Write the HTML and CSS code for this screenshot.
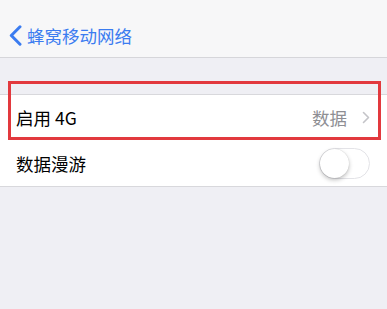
FILE: index.html
```html
<!DOCTYPE html>
<html>
<head>
<meta charset="utf-8">
<link rel="stylesheet" href="styles.css">
</head>
<body>
<div class="nav">
  <svg class="back" width="15" height="21" viewBox="0 0 15 21"><path d="M12 1.8 L3.3 10.5 L12 19.2" fill="none" stroke="#3b7cf0" stroke-width="3" stroke-linecap="round" stroke-linejoin="round"/></svg>
  <span class="title">蜂窝移动网络</span>
</div>
<div class="group">
  <div class="row">
    <span class="label">启用 4G</span>
    <span class="value">数据</span>
    <svg class="chev" width="8" height="13" viewBox="0 0 8 13"><path d="M1.5 1.5 L6.5 6.5 L1.5 11.5" fill="none" stroke="#c4c4c8" stroke-width="1.6" stroke-linecap="round" stroke-linejoin="round"/></svg>
  </div>
  <div class="row row2">
    <span class="label">数据漫游</span>
    <span class="toggle"><span class="knob"></span></span>
  </div>
</div>
<div class="highlight"></div>
</body>
</html>
```
FILE: styles.css
```css
html, body {
  margin: 0;
  padding: 0;
}
body {
  background: #efeff4;
  width: 387px;
  height: 309px;
  overflow: hidden;
  position: relative;
  font-family: "Noto Sans CJK SC", "Noto Sans", sans-serif;
}
.nav {
  height: 58px;
  box-sizing: border-box;
  background: #f7f7f8;
  border-bottom: 1px solid #d6d6da;
  display: flex;
  align-items: flex-start;
  padding-left: 8px;
  padding-top: 25px;
}
.back {
  display: block;
  margin-right: 4px;
}
.title {
  color: #3b7cf0;
  font-size: 17.5px;
  line-height: 21px;
}
.group {
  margin-top: 36px;
  background: #fff;
  border-top: 1px solid #d8d8dc;
  border-bottom: 1px solid #d8d8dc;
}
.row {
  height: 46px;
  display: flex;
  align-items: center;
  padding-left: 16px;
  padding-right: 17px;
}
.row:first-child {
  height: 45px;
}
.label {
  flex: 1;
  font-size: 17.5px;
  color: #000;
}
.value {
  font-size: 17.5px;
  color: #8e8e93;
  margin-right: 15px;
}
.chev {
  display: block;
}
.toggle {
  width: 49px;
  height: 29px;
  border: 1px solid #e3e3e7;
  border-radius: 16px;
  background: #fff;
  position: relative;
  box-sizing: content-box;
}
.knob {
  position: absolute;
  left: 0;
  top: 0;
  width: 29px;
  height: 29px;
  border-radius: 50%;
  background: #fff;
  box-shadow: 0 2px 4px rgba(0,0,0,0.25), 0 0 1px rgba(0,0,0,0.2);
}
.highlight {
  position: absolute;
  left: 8px;
  top: 81px;
  width: 373px;
  height: 59px;
  border: 3px solid #e2393e;
  box-sizing: border-box;
}
```
